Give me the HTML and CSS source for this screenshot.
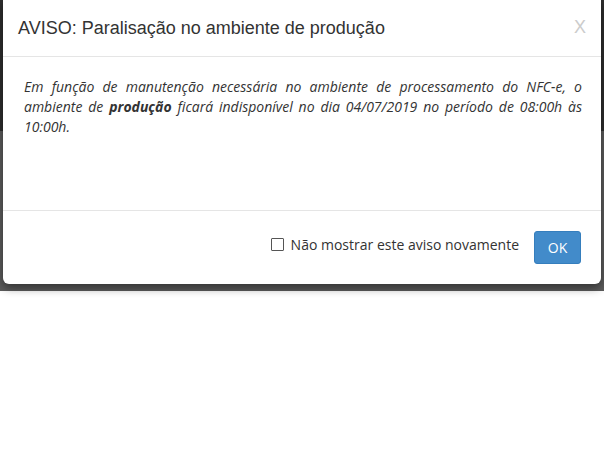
FILE: index.html
```html
<!DOCTYPE html>
<html lang="pt-BR">
<head>
<meta charset="utf-8">
<title>Aviso</title>
<link rel="stylesheet" href="styles.css">
</head>
<body>
<div class="backdrop">
  <div class="band-dark"></div>
  <div class="band-light"></div>
</div>
<div class="modal">
  <div class="modal-header">
    <h4 class="modal-title">AVISO: Paralisação no ambiente de produção</h4>
    <span class="close">X</span>
  </div>
  <div class="modal-body">
    <p class="msg">Em função de manutenção necessária no ambiente de processamento do NFC-e, o ambiente de <b>produção</b> ficará indisponível no dia 04/07/2019 no período de 08:00h às 10:00h.</p>
  </div>
  <div class="modal-footer">
    <label class="check"><span class="box"></span>Não mostrar este aviso novamente</label>
    <button class="btn">OK</button>
  </div>
</div>
</body>
</html>
```
FILE: styles.css
```css
html, body { margin: 0; padding: 0; background: #fff; }
body { width: 604px; height: 456px; position: relative; overflow: hidden; font-family: "Open Sans", sans-serif; }
.backdrop { height: 291px; display: flex; flex-direction: column; }
.band-dark { height: 131px; background: #2e2e2e; }
.band-light { flex: 1; background: #5c5c5c; }
.modal {
  position: absolute; left: 3px; top: 0; width: 598px; height: 284px;
  background: #fff; border-radius: 0 0 6px 6px;
  box-shadow: 0 4px 10px rgba(0,0,0,.45);
  display: flex; flex-direction: column;
}
.modal-header {
  height: 57px; box-sizing: border-box; border-bottom: 1px solid #e5e5e5;
  display: flex; align-items: center; justify-content: space-between;
  padding: 0 15px 0 15px;
}
.modal-title { margin: 0; font-family: "Liberation Sans", Arial, sans-serif; font-weight: normal; font-size: 18px; color: #333; line-height: 20px; }
.close { font-family: "Liberation Sans", Arial, sans-serif; font-size: 18px; color: #cccccc; margin-top: -2px; }
.modal-body { height: 154px; box-sizing: border-box; padding: 20px 19px 0 21px; border-bottom: 1px solid #e5e5e5; }
.msg { margin: 0; font-style: italic; font-size: 14px; line-height: 20px; color: #333; text-align: justify; }
.msg b { font-weight: bold; }
.modal-footer { flex: 1; display: flex; justify-content: flex-end; align-items: center; padding: 0 20px 2px 0; gap: 15px; }
.check { display: flex; align-items: center; font-size: 14px; color: #333; gap: 7px; margin-top: -4px; }
.box { width: 11px; height: 11px; border: 1px solid #555; border-radius: 1px; }
.btn {
  width: 47px; height: 33px; background: #428bca; border: 1px solid #357ebd; border-radius: 3px;
  color: #fff; font-family: "Open Sans", sans-serif; font-size: 14px; padding: 0; margin-top: 2px;
}
```
